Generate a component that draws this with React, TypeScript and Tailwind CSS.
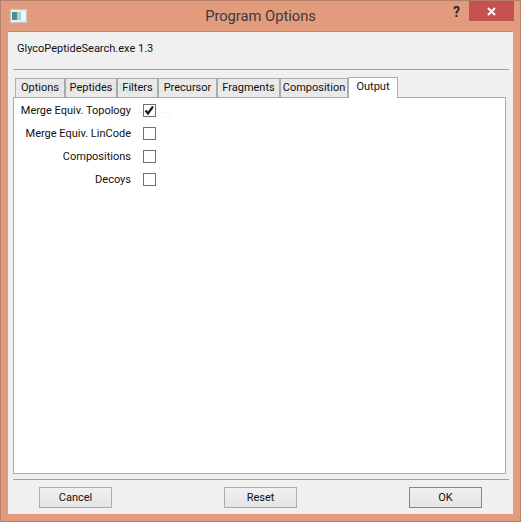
const FONT = "font-['Roboto','Noto_Sans',sans-serif]";

const TABS = [
  { label: "Options", width: "w-[50px]" },
  { label: "Peptides", width: "w-[52px]" },
  { label: "Filters", width: "w-[41px]" },
  { label: "Precursor", width: "w-[59px]" },
  { label: "Fragments", width: "w-[63px]" },
  { label: "Composition", width: "w-[68px]" },
];

const ROWS = [
  { label: "Merge Equiv. Topology", checked: true },
  { label: "Merge Equiv. LinCode", checked: false },
  { label: "Compositions", checked: false },
  { label: "Decoys", checked: false },
];

function CheckRow({ label, checked }: { label: string; checked: boolean }) {
  return (
    <div className="flex h-[23px] items-center">
      <span className="w-[117px] pt-[1px] text-right whitespace-nowrap">{label}</span>
      <span className="ml-[12px] mt-[-1px] flex h-[13px] w-[13px] items-center justify-center border border-[#707070] bg-white">
        {checked && (
          <svg width="11" height="11" viewBox="0 0 11 11">
            <path d="M1.5 5.5 L4 8.5 L9 1.5" fill="none" stroke="#1a1a1a" strokeWidth="2.2" />
          </svg>
        )}
      </span>
    </div>
  );
}

function DialogButton({ label, focused }: { label: string; focused?: boolean }) {
  return (
    <button
      className={`h-[21px] w-[73px] border bg-gradient-to-b from-[#f0f0f0] to-[#e5e5e5] text-[11px] leading-none ${
        focused ? "border-[#3399ff]" : "border-[#acacac]"
      }`}
    >
      {label}
    </button>
  );
}

export default function App() {
  return (
    <div className={`flex h-[522px] w-[521px] flex-col border border-[#b5806a] bg-[#e29b7d] text-[11px] text-[#111] ${FONT}`}>
      <div className="relative flex h-[30px] shrink-0 items-center justify-center">
        <svg className="absolute left-[9px] top-[8px]" width="17" height="14" viewBox="0 0 17 14">
          <rect x="0.5" y="0.5" width="16" height="13" fill="#e8eef0" stroke="#c9c9c9" />
          <rect x="2" y="3" width="5" height="8" fill="#4f8f8a" />
          <rect x="7" y="3" width="4" height="8" fill="#a8d4cf" />
          <rect x="11" y="3" width="4" height="8" fill="#f5f8f8" />
        </svg>
        <span className="text-[14.7px] text-[#3b3b3b]">Program Options</span>
        <span className="absolute left-[452px] top-[1px] text-[14px] font-bold text-[#2a2a2a]">?</span>
        <div className="absolute right-[6px] top-0 flex h-[20px] w-[45px] items-center justify-center bg-[#c75050]">
          <svg width="9" height="9" viewBox="0 0 9 9">
            <path d="M1 1 L8 8 M8 1 L1 8" stroke="#fff" strokeWidth="2" />
          </svg>
        </div>
      </div>

      <div className="mx-[7px] flex h-[483px] flex-col border-t border-[#c08a72] bg-[#f0f0f0] px-[5px]">
        <div className="flex h-[37px] items-center pb-[3px] pl-[4px]">GlycoPeptideSearch.exe 1.3</div>
        <div className="mr-[-1px] h-[1px] bg-[#a0a0a0]" />

        <div className="mt-[6px] flex h-[21px] items-end pl-[2px]">
          {TABS.map((tab) => (
            <div
              key={tab.label}
              className={`flex h-[19px] ${tab.width} items-center justify-center border border-b-0 border-[#acacac] bg-[#e9e9e9] whitespace-nowrap`}
            >
              {tab.label}
            </div>
          ))}
          <div className="relative z-10 mb-[-1px] flex h-[21px] w-[50px] items-start justify-center border border-b-0 border-[#acacac] bg-white pt-[1px]">
            Output
          </div>
        </div>

        <div className="relative flex h-[377px] w-[493px] flex-col border border-[#acacac] bg-white pt-[1px]">
          {ROWS.map((row) => (
            <CheckRow key={row.label} label={row.label} checked={row.checked} />
          ))}
          <div className="absolute left-[32px] top-[-21px] text-[15px] font-bold tracking-[2px] text-black/5">SOFTPEDIA</div>
          <div className="absolute left-[70px] top-[9px] text-[10px] text-black/5">www.softpedia.com</div>
        </div>

        <div className="mr-[-1px] mt-[5px] h-[1px] bg-[#a0a0a0]" />
        <div className="mt-[7px] flex justify-between px-[26px]">
          <DialogButton label="Cancel" />
          <DialogButton label="Reset" />
          <DialogButton label="OK" focused />
        </div>
      </div>
    </div>
  );
}
